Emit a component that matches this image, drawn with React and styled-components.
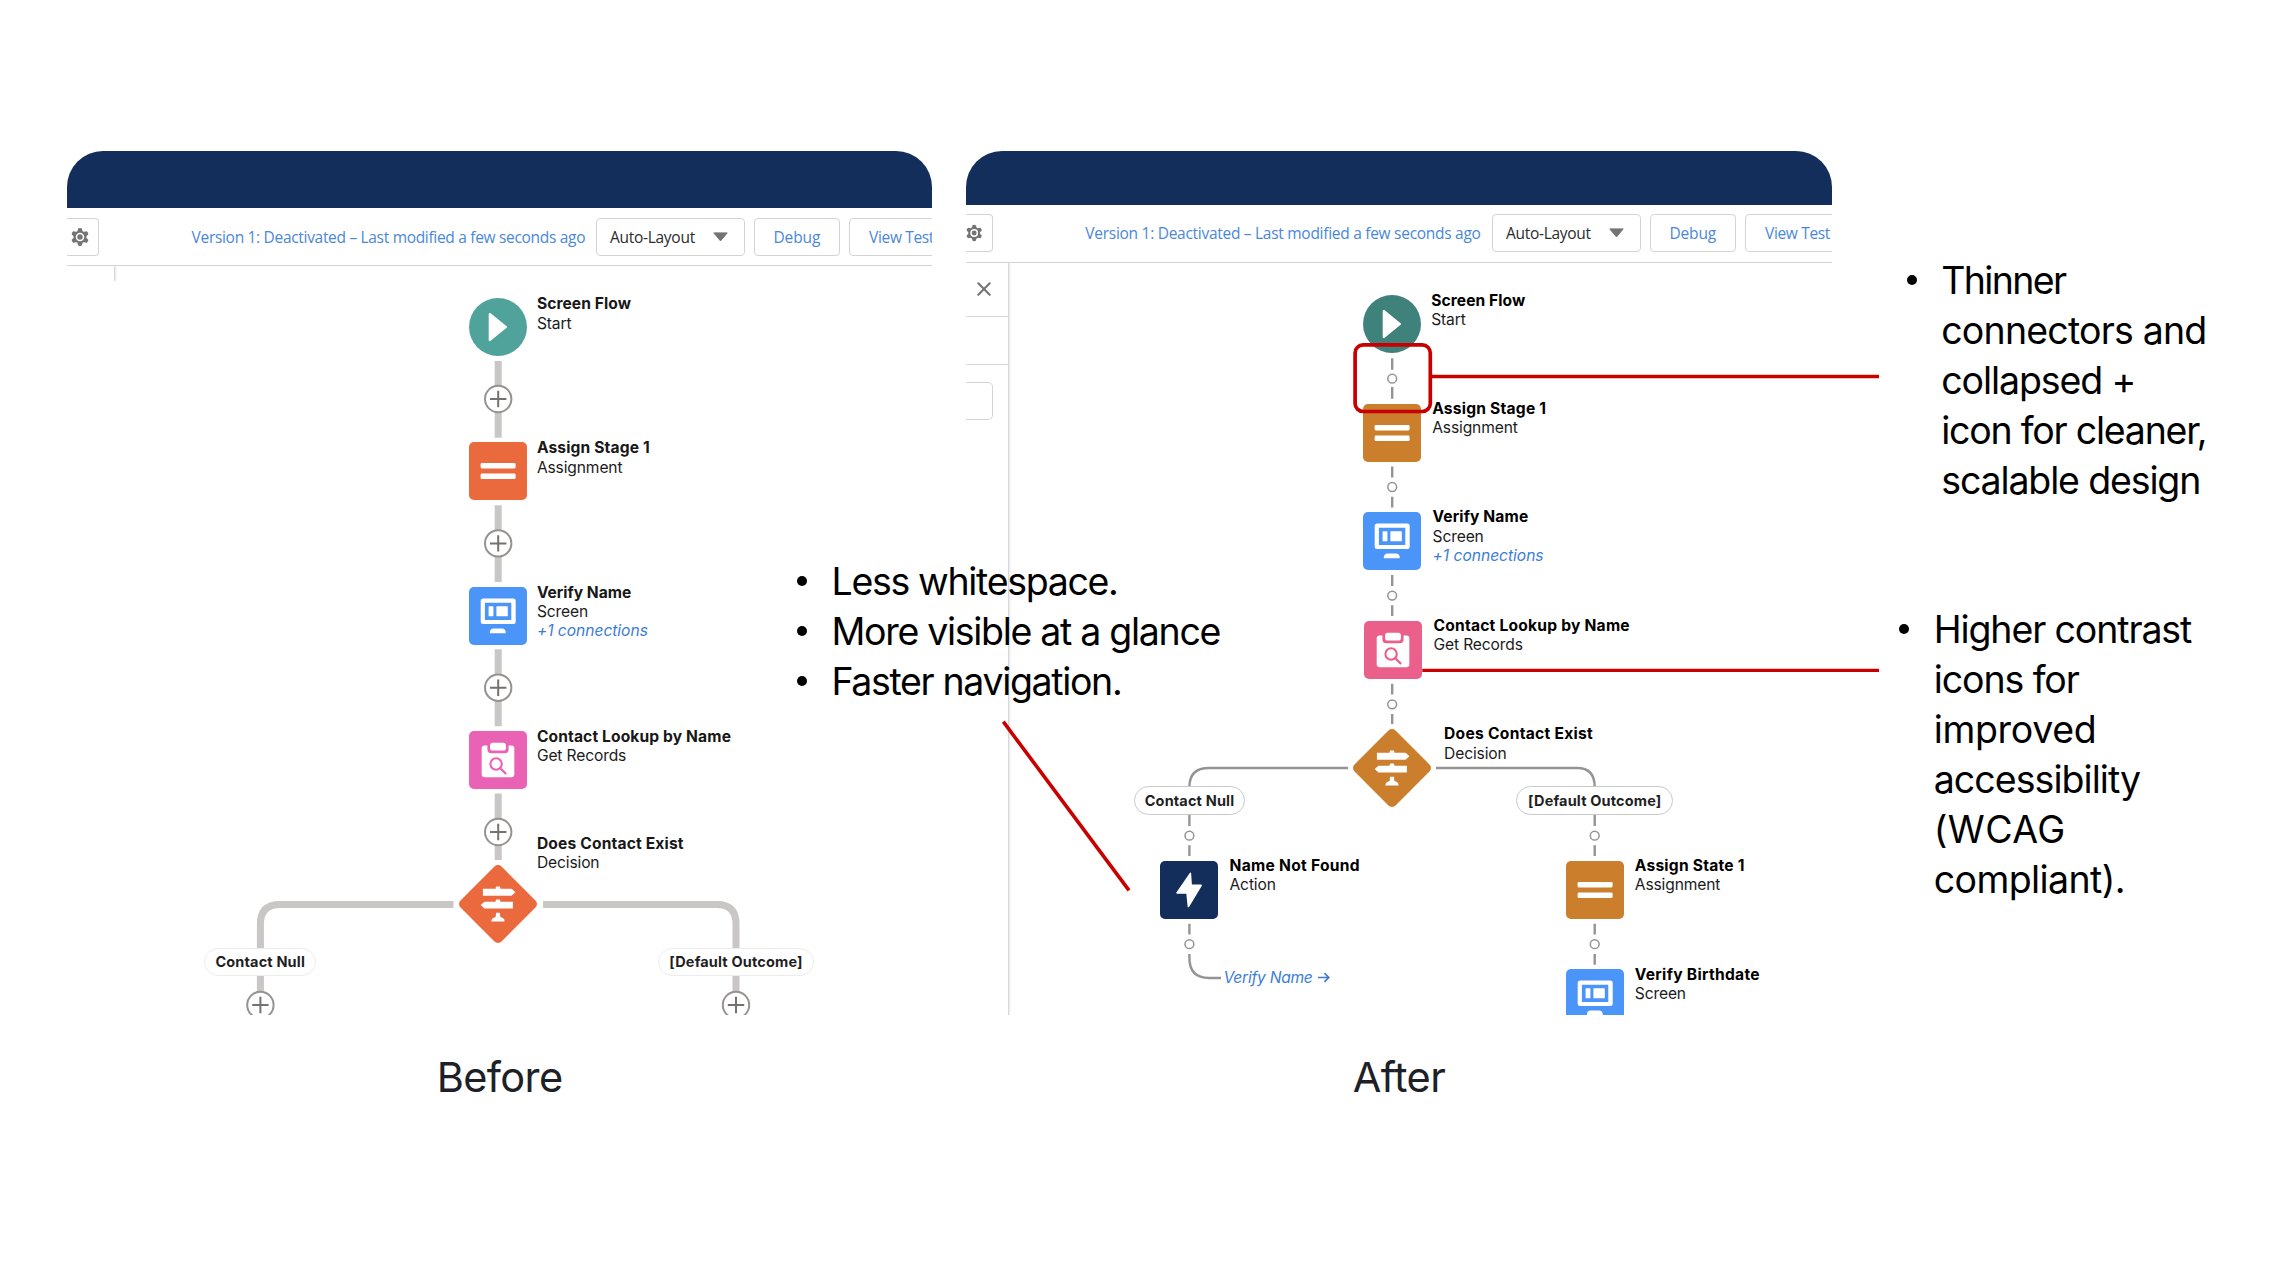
import React from 'react';
import styled, { createGlobalStyle, css } from 'styled-components';

const c = {
  navy: '#142e5c',
  link: '#4a87d9',
  line: '#d4d4d4',
  thick: '#c9c7c5',
  thin: '#969492',
  blue: '#4c95f8',
  amber: '#cb7e2c',
  orange: '#ea6a3e',
  red: '#c80000',
};

const GlobalStyle = createGlobalStyle`
  *, *::before, *::after { box-sizing: border-box; }
  body { margin: 0; background: #fff; font-family: Inter, "Liberation Sans", sans-serif; }
`;

/* ---------- slide ---------- */
const Slide = styled.main`
  position: relative;
  display: flex;
  align-items: flex-start;
  width: 2272px;
  height: 1262px;
  padding: 151px 0 0 67px;
  overflow: hidden;
  background: #fff;
`;
const Figure = styled.figure`
  flex: none;
  width: 865.2px;
  margin: 0 34.2px 0 0;
`;
const Caption = styled.figcaption`
  margin-top: 36.5px;
  font-size: 41.5px;
  line-height: 50px;
  letter-spacing: -0.6px;
  text-align: center;
  color: #1d2127;
`;
const Screen = styled.div`
  display: flex;
  flex-direction: column;
  height: 864px;
  overflow: hidden;
  border-radius: 36px 36px 0 0;
`;
const TitleBar = styled.div`
  flex: none;
  height: ${(p) => p.$height}px;
  background: ${c.navy};
`;

/* ---------- toolbar ---------- */
const Toolbar = styled.div`
  flex: none;
  display: flex;
  align-items: center;
  height: ${(p) => p.$height}px;
  border-bottom: 1.4px solid ${c.line};
  font: 400 15.5px/20px "Open Sans", "Noto Sans", sans-serif;
  color: ${c.link};
  white-space: nowrap;
`;
const ToolButton = styled.div`
  flex: none;
  display: flex;
  align-items: center;
  justify-content: ${(p) => p.$justify || 'center'};
  width: ${(p) => p.$width}px;
  height: 38px;
  margin-right: 9.5px;
  padding: ${(p) => p.$pad || '0'};
  border: 1.4px solid ${c.line};
  border-radius: 4px;
  color: ${(p) => p.$color || 'inherit'};
  letter-spacing: ${(p) => p.$track || 0}px;
`;
const GearButton = styled(ToolButton)`
  justify-content: flex-end;
  margin-right: 92.6px;
  padding-right: ${(p) => p.$inset}px;
  border-left: 0;
  border-radius: 0 4px 4px 0;
`;
const Status = styled.span`
  flex: none;
  width: ${(p) => p.$width}px;
  letter-spacing: ${(p) => p.$track}px;
`;

/* ---------- canvas ---------- */
const Canvas = styled.div`
  position: relative;
  flex: 1;
  overflow: hidden;
`;
const Layer = styled.div`
  position: absolute;
  left: ${(p) => -p.$x}px;
  top: ${(p) => -p.$y}px;
  width: 2272px;
  height: 1262px;
`;
const Wires = styled.svg`
  position: absolute;
  inset: 0;
  width: 2272px;
  height: 1262px;
  fill: none;
`;
const NodeBox = styled.div`
  position: absolute;
  left: ${(p) => p.$x - 29}px;
  top: ${(p) => p.$y - 29}px;
  display: flex;
  align-items: flex-start;
`;
const Shape = styled.div`
  position: relative;
  flex: none;
  width: 58px;
  height: 58px;
  background: ${(p) => (p.$kind === 'diamond' ? 'none' : p.$color)};
  border-radius: ${(p) => (p.$kind === 'circle' ? '50%' : '5px')};
  ${(p) =>
    p.$kind === 'diamond' &&
    css`
      &::before {
        content: '';
        position: absolute;
        inset: 0;
        background: ${p.$color};
        border-radius: 5px;
        transform: rotate(45deg);
        box-shadow: 0 0 0 5px #fff;
      }
    `}
  svg {
    position: absolute;
    inset: 0;
    width: 58px;
    height: 58px;
  }
`;
const Label = styled.div`
  margin: ${(p) => p.$dy}px 0 0 ${(p) => p.$dx}px;
  font-size: 15.6px;
  line-height: 19.4px;
  white-space: nowrap;
  color: #1b1b1b;
`;
const Name = styled.div`
  font-weight: 700;
  letter-spacing: ${(p) => p.$track}px;
  color: ${(p) => p.$color || '#181818'};
`;
const Kind = styled.div`
  letter-spacing: -0.13px;
`;
const Link = styled.div`
  font-style: italic;
  letter-spacing: -0.03px;
  color: #3d7dd5;
`;
const JumpLink = styled(Link)`
  position: absolute;
  left: 1223.6px;
  top: 968.3px;
  font-size: 15.6px;
  line-height: 19.4px;
  letter-spacing: -0.25px;
  white-space: nowrap;
  svg {
    margin-left: 5.5px;
  }
`;
const Pill = styled.div`
  position: absolute;
  left: ${(p) => p.$x - p.$width / 2}px;
  top: ${(p) => p.$y}px;
  display: flex;
  align-items: center;
  justify-content: center;
  width: ${(p) => p.$width}px;
  height: 28.6px;
  border: 1.4px solid ${(p) => p.$border};
  border-radius: 15px;
  background: #fff;
  font-size: 14.5px;
  font-weight: 700;
  letter-spacing: 0.16px;
  white-space: nowrap;
  color: #1f1f1f;
`;

/* ---------- side panel ---------- */
const SidePanel = styled.aside`
  display: flex;
  flex-direction: column;
  width: ${(p) => p.$width}px;
  height: ${(p) => p.$height};
  border-right: 1.6px solid #d8d8d8;
  box-shadow: 1px 0 2px rgba(0, 0, 0, 0.1);
  clip-path: inset(0 -4px 0 0);
  background: #fff;
`;
const PanelRow = styled.div`
  flex: none;
  display: flex;
  align-items: center;
  height: ${(p) => p.$height}px;
  padding-left: 10.5px;
  border-bottom: 1.3px solid #d8d8d8;
`;
const PanelField = styled.div`
  width: 27px;
  height: 38px;
  margin-top: 16.5px;
  border: 1.4px solid ${c.line};
  border-left: 0;
  border-radius: 0 5px 5px 0;
`;

/* ---------- notes ---------- */
const NotesColumn = styled.section`
  display: flex;
  flex-direction: column;
  gap: 99px;
  padding: 104.6px 0 0 33px;
`;
const noteText = css`
  margin: 0;
  padding: 0;
  list-style: none;
  font-size: 37.5px;
  line-height: 50px;
  color: #000;
  white-space: nowrap;
`;
const NoteList = styled.ul`
  ${noteText}
  margin-left: ${(p) => p.$indent}px;
`;
const OverlayNotes = styled.ul`
  ${noteText}
  position: absolute;
  left: 797px;
  top: 556.6px;
`;
const Note = styled.li`
  display: grid;
  grid-template-columns: 34.5px auto;
  &::before {
    content: '';
    width: 10px;
    height: 10px;
    margin-top: 19.8px;
    border-radius: 50%;
    background: #000;
  }
`;
const NoteLine = styled.span`
  grid-column: 2;
  letter-spacing: ${(p) => p.$track}px;
`;
const Callouts = styled.svg`
  position: absolute;
  inset: 0;
  width: 2272px;
  height: 1262px;
  pointer-events: none;
`;

/* ---------- icons ---------- */
const Play = () => (
  <svg viewBox="0 0 58 58">
    <path d="M20.7 15.9 37 29 20.7 42.1Z" fill="#fff" stroke="#fff" strokeWidth="2" strokeLinejoin="round" />
  </svg>
);
const Equals = () => (
  <svg viewBox="0 0 58 58" fill="#fff">
    <rect x="11.6" y="21" width="35" height="5.4" rx="1.3" />
    <rect x="11.6" y="31.6" width="35" height="5.4" rx="1.3" />
  </svg>
);
const Monitor = () => (
  <svg viewBox="0 0 58 58" fill="#fff">
    <path
      fillRule="evenodd"
      d="M14.2 11.4H44.2a2.5 2.5 0 0 1 2.5 2.5V34.6a2.5 2.5 0 0 1-2.5 2.5H14.2a2.5 2.5 0 0 1-2.5-2.5V13.9a2.5 2.5 0 0 1 2.5-2.5ZM15.9 15.7V32.9H42.3V15.7Z"
    />
    <rect x="19.6" y="19.2" width="4.8" height="10.1" rx="0.6" />
    <rect x="27.4" y="19.2" width="11.4" height="10.1" rx="0.6" />
    <path d="M20.8 46.3q-.2-4.7 4-4.7h8q4.2 0 4 4.7Z" />
  </svg>
);
const Clipboard = ({ color }) => (
  <svg viewBox="0 0 58 58">
    <rect x="12.7" y="14.4" width="32.6" height="31.8" rx="3" fill="#fff" />
    <path d="M18.4 13.6V18.4a3.8 3.8 0 0 0 3.8 3.8H35.8a3.8 3.8 0 0 0 3.8-3.8V13.6Z" fill={color} />
    <rect x="21.1" y="11.7" width="15.8" height="7.9" rx="2.6" fill="#fff" />
    <circle cx="27.1" cy="33" r="5.7" fill="none" stroke={color} strokeWidth="2.1" />
    <path d="m31.3 37.2 5.2 5.2" stroke={color} strokeWidth="2.2" strokeLinecap="round" />
  </svg>
);
const Signpost = () => (
  <svg viewBox="-29 -29 58 58" fill="#fff">
    <path d="M-15.1-15.2H-2.3V-16.2q0-1.2 1.2-1.2H1.1q1.2 0 1.2 1.2V-15.2H13.6L17.4-11.8 13.6-8.3H-15.1Z" />
    <path d="M14.9-2.3H2.3V-3.4q0-1.2-1.2-1.2H-1.1q-1.2 0-1.2 1.2V-2.3H-13.6L-17.3 1.1-13.6 4.6H14.9Z" />
    <path d="M-1.9 8.8H1.9L2.3 12.8 5.2 14.2Q6.6 15.2 6.6 17.5H-6.6Q-6.6 15.2-5.2 14.2L-2.3 12.8Z" />
  </svg>
);
const Bolt = () => (
  <svg viewBox="0 0 58 58">
    <path
      d="M30.4 12.3 17 31.9H27L28.4 45.6 41.2 24.3H31.2Z"
      fill="#fff"
      stroke="#fff"
      strokeWidth="1.5"
      strokeLinejoin="round"
    />
  </svg>
);
const Gear = () => (
  <svg width="18" height="18" viewBox="-9 -9 18 18">
    <g fill="#747474">
      <circle r="6.5" />
      {[0, 60, 120, 180, 240, 300].map((a) => (
        <path key={a} d="M-2.6-5.4-1.9-8.3Q-1.7-9 0-9T1.9-8.3L2.6-5.4Z" transform={`rotate(${a})`} />
      ))}
    </g>
    <circle r="3.5" fill="#747474" stroke="#fff" strokeWidth="1.6" />
  </svg>
);
const Caret = () => (
  <svg width="15" height="10" viewBox="0 0 15 10">
    <path d="M.8.9H14.2L7.5 8.9Z" fill="#747474" stroke="#747474" strokeLinejoin="round" />
  </svg>
);
const Close = () => (
  <svg width="14" height="14" viewBox="0 0 14 14">
    <path d="M1.3 1.3 12.7 12.7M12.7 1.3 1.3 12.7" stroke="#747474" strokeWidth="2.1" strokeLinecap="round" />
  </svg>
);

/* ---------- flow parts ---------- */
function Node({ x, y, kind = 'square', color, icon, dx = 9.7, dy = -4, name, type, link, track = 0.12, dark }) {
  return (
    <NodeBox $x={x} $y={y}>
      <Shape $kind={kind} $color={color}>
        {icon}
      </Shape>
      <Label $dx={dx} $dy={dy}>
        <Name $track={track} $color={dark ? '#000' : undefined}>{name}</Name>
        <Kind>{type}</Kind>
        {link && <Link>{link}</Link>}
      </Label>
    </NodeBox>
  );
}

const AddButton = ({ x, y }) => (
  <g transform={`translate(${x} ${y})`}>
    <circle r="13.2" fill="#fff" stroke={c.thin} strokeWidth="2" />
    <path d="M-8.2 0H8.2M0-8.2V8.2" stroke="#747270" strokeWidth="2" />
  </g>
);
const AddDot = ({ x, y }) => <circle cx={x} cy={y} r="4.4" stroke={c.thin} strokeWidth="1.5" fill="#fff" />;

function TopBar({ height, gearWidth, statusWidth, statusTrack }) {
  return (
    <Toolbar $height={height}>
      <GearButton $width={gearWidth} $inset={9}>
        <Gear />
      </GearButton>
      <Status $width={statusWidth} $track={statusTrack}>
        Version 1: Deactivated – Last modified a few seconds ago
      </Status>
      <ToolButton $width={149} $justify="space-between" $pad="0 15.5px 0 13.4px" $color="#2b2b2b" $track={-0.28}>
        Auto-Layout
        <Caret />
      </ToolButton>
      <ToolButton $width={85.5} $track={-0.12}>Debug</ToolButton>
      <ToolButton $width={126} $justify="flex-start" $pad="0 0 0 19px" $track={-0.35}>
        View Test
      </ToolButton>
    </Toolbar>
  );
}

function BeforeFlow() {
  const x = 498.2;
  return (
    <Canvas>
      <SidePanel $width={48.4} $height="15px" />
      <Layer $x={67} $y={266.3}>
        <Wires>
          <g stroke={c.thick} strokeWidth="7">
            <path d="M498.2 361V437.8M498.2 505.2V582M498.2 649.3V726.2M498.2 793.5V860" />
            <path d="M543 904.5H717Q736 904.5 736 924V1005" />
            <path d="M453.5 904.5H280Q260.4 904.5 260.4 924V1005" />
          </g>
          {[399, 543.4, 687.7, 832].map((y) => (
            <AddButton key={y} x={x} y={y} />
          ))}
          <AddButton x={260.4} y={1005} />
          <AddButton x={736} y={1005} />
        </Wires>
        <Node x={x} y={327} kind="circle" color="#50a39b" icon={<Play />} dy={-3.7} name="Screen Flow" type="Start" track={0.08} />
        <Node x={x} y={471.4} color={c.orange} icon={<Equals />} name="Assign Stage 1" type="Assignment" track={0.14} />
        <Node x={x} y={615.6} color={c.blue} icon={<Monitor />} name="Verify Name" type="Screen" link="+1 connections" track={0} />
        <Node x={x} y={759.8} color="#ea62b4" icon={<Clipboard color="#ea62b4" />} name="Contact Lookup by Name" type="Get Records" />
        <Node x={x} y={904.2} kind="diamond" color={c.orange} icon={<Signpost />} dy={-41.2} name="Does Contact Exist" type="Decision" track={0.16} />
        <Pill $x={260.2} $y={947.5} $width={112.4} $border="#ececec">Contact Null</Pill>
        <Pill $x={736} $y={947.5} $width={156} $border="#ececec">[Default Outcome]</Pill>
      </Layer>
    </Canvas>
  );
}

function AfterFlow() {
  const x = 1392.2;
  return (
    <Canvas>
      <SidePanel $width={42.6} $height="100%">
        <PanelRow $height={54}>
          <Close />
        </PanelRow>
        <PanelRow $height={48.5} />
        <PanelField />
      </SidePanel>
      <Layer $x={966.4} $y={262.6}>
        <Wires>
          <g stroke={c.thin} strokeWidth="2.4">
            <path d="M1392.2 358.3V369.8M1392.2 387V398.8M1392.2 466.6V477.4M1392.2 496.8V507.6M1392.2 575V586M1392.2 605.2V616M1392.2 683.8V694.6M1392.2 714V724.8" />
            <path d="M1436 768H1577Q1594.7 768 1594.7 787M1594.7 815V826M1594.7 845.3V856M1594.7 923.8V934.6M1594.7 954V964.8" />
            <path d="M1348.5 768H1209Q1189.4 768 1189.4 787M1189.4 815V826M1189.4 845.3V856M1189.4 923.8V934.6" />
            <path d="M1189.4 954V958Q1189.4 978 1209 978H1221" />
          </g>
          {[378.7, 487, 595.6, 704.3].map((y) => (
            <AddDot key={y} x={x} y={y} />
          ))}
          {[835.7, 944.2].map((y) => (
            <g key={y}>
              <AddDot x={1189.4} y={y} />
              <AddDot x={1594.7} y={y} />
            </g>
          ))}
        </Wires>
        <Node dark x={x} y={324} kind="circle" color="#3f817b" icon={<Play />} dx={10} dy={-4} name="Screen Flow" type="Start" track={0.08} />
        <Node dark x={x} y={433} color={c.amber} icon={<Equals />} dx={11} dy={-5.4} name="Assign Stage 1" type="Assignment" track={0.22} />
        <Node dark x={x} y={541} color={c.blue} icon={<Monitor />} dx={11.4} dy={-4.8} name="Verify Name" type="Screen" link="+1 connections" track={0.12} />
        <Node dark x={1393.3} y={650} color="#ea608a" icon={<Clipboard color="#ea608a" />} dx={11.2} dy={-5.4} name="Contact Lookup by Name" type="Get Records" track={0.22} />
        <Node dark x={x} y={768} kind="diamond" color={c.amber} icon={<Signpost />} dx={22.9} dy={-14.8} name="Does Contact Exist" type="Decision" track={0.28} />
        <Pill $x={1189.5} $y={786.3} $width={111} $border="#c9c9c9">Contact Null</Pill>
        <Pill $x={1594.8} $y={786.3} $width={157} $border="#c9c9c9">[Default Outcome]</Pill>
        <Node dark x={1189.5} y={890} color={c.navy} icon={<Bolt />} dx={11} dy={-5} name="Name Not Found" type="Action" track={0.28} />
        <Node dark x={1594.8} y={890} color={c.amber} icon={<Equals />} dx={11} dy={-5} name="Assign State 1" type="Assignment" track={0.22} />
        <Node dark x={1594.8} y={998.3} color={c.blue} icon={<Monitor />} dx={11} dy={-4.8} name="Verify Birthdate" type="Screen" track={0.3} />
        <JumpLink>
          Verify Name
          <svg width="12" height="11" viewBox="0 0 12 11" fill="none" stroke="#3d7dd5" strokeWidth="1.7">
            <path d="M0 5.5H10.6M6.4 1.2 10.8 5.5 6.4 9.8" />
          </svg>
        </JumpLink>
      </Layer>
    </Canvas>
  );
}

export default function App() {
  return (
    <Slide>
      <GlobalStyle />
      <Figure>
        <Screen>
          <TitleBar $height={57} />
          <TopBar height={58.3} gearWidth={32} statusWidth={404} statusTrack={-0.31} />
          <BeforeFlow />
        </Screen>
        <Caption>Before</Caption>
      </Figure>
      <Figure>
        <Screen>
          <TitleBar $height={54} />
          <TopBar height={57.6} gearWidth={26.4} statusWidth={406.2} statusTrack={-0.28} />
          <AfterFlow />
        </Screen>
        <Caption>After</Caption>
      </Figure>
      <NotesColumn>
        <NoteList $indent={8}>
          <Note>
            <NoteLine $track={-1.65}>Thinner</NoteLine>
            <NoteLine $track={-0.81}>connectors and</NoteLine>
            <NoteLine $track={-1.1}>collapsed +</NoteLine>
            <NoteLine $track={-1.23}>icon for cleaner,</NoteLine>
            <NoteLine $track={-1.14}>scalable design</NoteLine>
          </Note>
        </NoteList>
        <NoteList $indent={0.5}>
          <Note>
            <NoteLine $track={-1.12}>Higher contrast</NoteLine>
            <NoteLine $track={-1.1}>icons for</NoteLine>
            <NoteLine $track={-0.34}>improved</NoteLine>
            <NoteLine $track={-0.95}>accessibility</NoteLine>
            <NoteLine $track={0.4}>(WCAG</NoteLine>
            <NoteLine $track={-0.6}>compliant).</NoteLine>
          </Note>
        </NoteList>
      </NotesColumn>
      <OverlayNotes>
        <Note><NoteLine $track={-1.32}>Less whitespace.</NoteLine></Note>
        <Note><NoteLine $track={-1.3}>More visible at a glance</NoteLine></Note>
        <Note><NoteLine $track={-1.35}>Faster navigation.</NoteLine></Note>
      </OverlayNotes>
      <Callouts fill="none" stroke={c.red}>
        <rect x="1355.1" y="344.9" width="75.2" height="66.6" rx="8" strokeWidth="3.7" />
        <path d="M1432 376.5H1879M1422.3 670.3H1879" strokeWidth="3.3" />
        <path d="M1003.3 721.7 1129 890.3" strokeWidth="3.6" />
      </Callouts>
    </Slide>
  );
}
